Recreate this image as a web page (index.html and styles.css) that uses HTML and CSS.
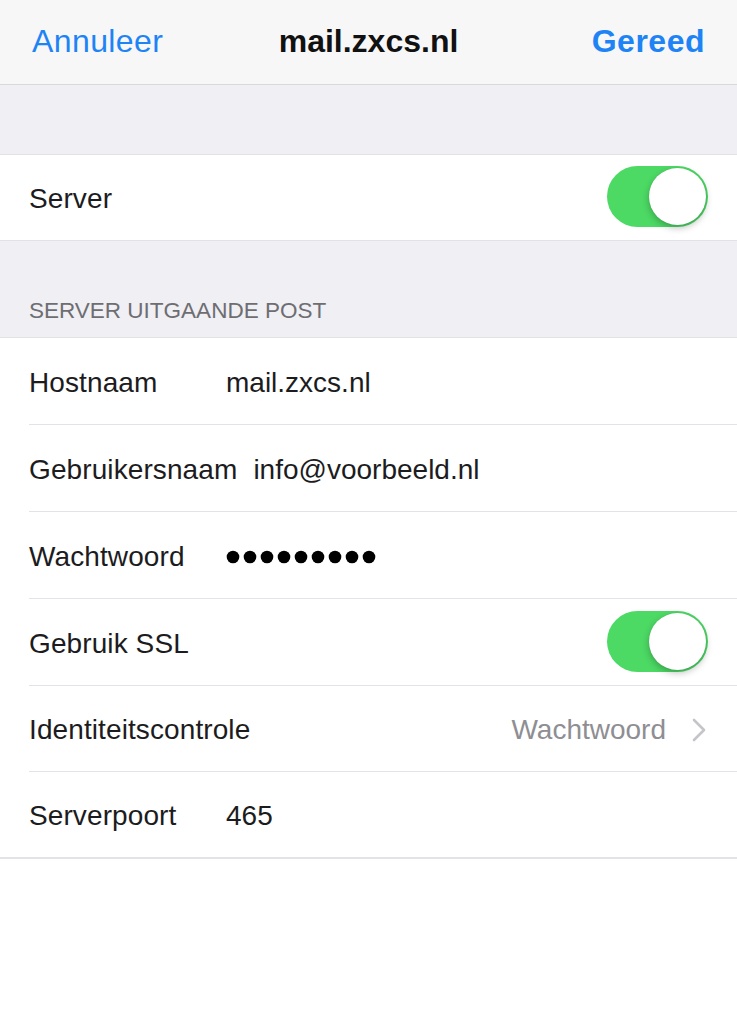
FILE: index.html
```html
<!DOCTYPE html>
<html lang="nl">
<head>
<meta charset="utf-8">
<title>mail.zxcs.nl</title>
<link rel="stylesheet" href="styles.css">
</head>
<body>
<header class="navbar">
  <span class="nav-btn nav-left">Annuleer</span>
  <span class="nav-title">mail.zxcs.nl</span>
  <span class="nav-btn nav-right">Gereed</span>
</header>

<div class="spacer"></div>

<section class="group">
  <div class="row row-short">
    <span class="label">Server</span>
    <span class="fill"></span>
    <span class="switch"><span class="knob"></span></span>
  </div>
</section>

<div class="section-header">SERVER UITGAANDE POST</div>

<section class="group group-bottom">
  <div class="row">
    <span class="label">Hostnaam</span>
    <span class="value">mail.zxcs.nl</span>
  </div>
  <div class="row">
    <span class="label">Gebruikersnaam</span>
    <span class="value">info@voorbeeld.nl</span>
  </div>
  <div class="row">
    <span class="label">Wachtwoord</span>
    <span class="value">
      <svg class="dots" width="152" height="14" viewBox="0 0 152 14" aria-label="wachtwoord">
        <circle cx="7" cy="7" r="6.3"/><circle cx="24" cy="7" r="6.3"/><circle cx="41" cy="7" r="6.3"/>
        <circle cx="58" cy="7" r="6.3"/><circle cx="75" cy="7" r="6.3"/><circle cx="92" cy="7" r="6.3"/>
        <circle cx="109" cy="7" r="6.3"/><circle cx="126" cy="7" r="6.3"/><circle cx="143" cy="7" r="6.3"/>
      </svg>
    </span>
  </div>
  <div class="row">
    <span class="label">Gebruik SSL</span>
    <span class="fill"></span>
    <span class="switch"><span class="knob"></span></span>
  </div>
  <div class="row row-mid">
    <span class="label">Identiteitscontrole</span>
    <span class="fill"></span>
    <span class="detail">Wachtwoord</span>
    <svg class="chevron" width="15" height="24" viewBox="0 0 15 24">
      <polyline points="2,2 12,12 2,22" fill="none" stroke="#c4c4c9" stroke-width="2.6" stroke-linecap="round" stroke-linejoin="round"/>
    </svg>
  </div>
  <div class="row">
    <span class="label">Serverpoort</span>
    <span class="value">465</span>
  </div>
</section>
</body>
</html>
```

FILE: styles.css
```css
* { box-sizing: border-box; }

html, body {
  margin: 0;
  padding: 0;
  background: #ffffff;
  font-family: "Liberation Sans", Arial, sans-serif;
  color: #1c1c1e;
}

.navbar {
  height: 85px;
  background: #f7f7f8;
  border-bottom: 1px solid #d8d8dc;
  display: grid;
  grid-template-columns: 1fr auto 1fr;
  align-items: center;
  padding: 0 32px 2px 32px;
  font-size: 32px;
}

.nav-btn { color: #1e84f5; }
.nav-left { justify-self: start; letter-spacing: 0.4px; }
.nav-right { justify-self: end; font-weight: bold; letter-spacing: 0.5px; }
.nav-title { font-weight: bold; color: #111; }

.spacer {
  height: 69px;
  background: #efeff4;
}

.group {
  background: #fff;
  border-top: 1px solid #e2e2e6;
  border-bottom: 1px solid #e2e2e6;
}

.group-bottom {
  border-bottom: 2px solid #e2e2e7;
}

.row {
  height: 87px;
  margin-left: 29px;
  padding-right: 29px;
  padding-top: 3px;
  display: flex;
  align-items: center;
  gap: 16px;
  font-size: 28px;
  border-bottom: 1px solid #e3e3e7;
}

.row-mid { height: 86px; }
.row:last-child { border-bottom: none; height: 85px; }
.row-short { height: 84px; }

.label {
  min-width: 181px;
  white-space: nowrap;
  letter-spacing: 0.1px;
}

.value { white-space: nowrap; display: flex; align-items: center; }

.dots { fill: #000; display: block; margin-top: 0; }

.fill { flex: 1; }

.detail { color: #8e8e93; }

.chevron { margin-left: 10px; margin-right: 1px; display: block; }

.switch {
  width: 101px;
  height: 61px;
  border-radius: 31px;
  background: #4cd964;
  display: flex;
  align-items: center;
  justify-content: flex-end;
  padding: 2px;
  margin-top: -5px;
}

.knob {
  width: 57px;
  height: 57px;
  border-radius: 50%;
  background: #fff;
  box-shadow: 0 3px 7px rgba(0, 0, 0, 0.25), 0 0 1px rgba(0, 0, 0, 0.15);
}

.section-header {
  height: 96px;
  background: #efeff4;
  color: #6d6d72;
  font-size: 22.5px;
  padding: 0 29px 13px 29px;
  display: flex;
  align-items: flex-end;
}
```
